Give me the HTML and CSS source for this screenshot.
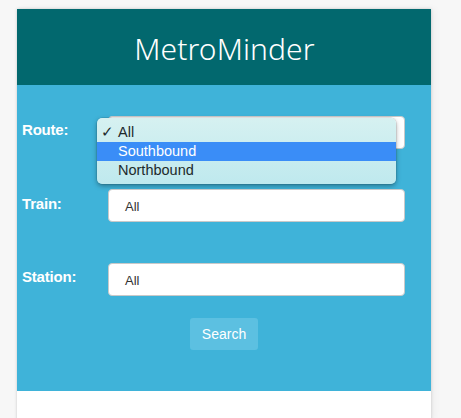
FILE: index.html
```html
<!DOCTYPE html>
<html>
<head>
<meta charset="utf-8">
<link rel="stylesheet" href="styles.css">
</head>
<body>
<div class="card">
  <header class="header"><h1 class="title">MetroMinder</h1></header>
  <main class="panel">
    <div class="row row-route">
      <label class="label">Route:</label>
      <div class="field"><span class="value"></span></div>
      <ul class="menu">
        <li class="opt"><span class="check">✓</span>All</li>
        <li class="opt opt-active">Southbound</li>
        <li class="opt">Northbound</li>
      </ul>
    </div>
    <div class="row row-train">
      <label class="label">Train:</label>
      <div class="field"><span class="value">All</span></div>
    </div>
    <div class="row row-station">
      <label class="label">Station:</label>
      <div class="field"><span class="value">All</span></div>
    </div>
    <div class="actions"><button class="btn">Search</button></div>
  </main>
  <footer class="foot"></footer>
</div>
</body>
</html>
```
FILE: styles.css
```css
html, body { margin: 0; padding: 0; }
body {
  background: #f7f7f7;
  width: 461px;
  height: 418px;
  overflow: hidden;
  font-family: "Liberation Sans", Arial, sans-serif;
}
.card {
  margin: 9px 0 0 17px;
  width: 414px;
  background: #fff;
  box-shadow: 0 0 3px rgba(0,0,0,0.18), 4px 0 8px rgba(0,0,0,0.04);
}
.header {
  background: #02686e;
  height: 76px;
  display: flex;
  align-items: center;
  justify-content: center;
}
.title {
  margin: 0;
  color: #fff;
  font-family: "Noto Sans", sans-serif;
  font-weight: 300;
  font-size: 30px;
  letter-spacing: 0.1px;
  padding-left: 1px;
  padding-top: 2px;
}
.panel {
  background: #3fb3d9;
  height: 306px;
  padding-top: 31px;
  box-sizing: border-box;
}
.row {
  position: relative;
  display: flex;
  align-items: flex-start;
  height: 33px;
  margin-left: 5px;
}
.row-train { margin-top: 40px; }
.row-station { margin-top: 41px; }
.label {
  width: 86px;
  color: #fff;
  font-weight: bold;
  font-size: 15px;
  letter-spacing: -0.2px;
  padding-top: 5px;
}
.row-train .label { padding-top: 6px; }
.row-station .label { padding-top: 5px; }
.field {
  width: 297px;
  height: 33px;
  box-sizing: border-box;
  background: #fff;
  border: 1px solid #c9c9c9;
  border-radius: 4px;
  display: flex;
  align-items: center;
  padding-left: 16px;
  padding-top: 1px;
  font-size: 13px;
  color: #333;
}
.menu {
  position: absolute;
  left: 75px;
  top: 2px;
  width: 299px;
  height: 66px;
  box-sizing: border-box;
  margin: 0;
  padding: 5px 0 0 0;
  list-style: none;
  border-radius: 5px;
  background: linear-gradient(#d6f1f1, #bfe9ee);
  box-shadow: 0 2px 5px rgba(0,0,0,0.35), 0 0 0 0.5px rgba(0,0,0,0.15);
  font-family: "Liberation Sans", Arial, sans-serif;
  font-size: 14.5px;
  color: #1d2a2c;
}
.opt {
  height: 19px;
  line-height: 19px;
  padding-left: 21px;
  position: relative;
}
.opt-active {
  background: #3a8df7;
  color: #fff;
}
.check {
  position: absolute;
  left: 4px;
  top: 0;
}
.actions {
  display: flex;
  justify-content: center;
  margin-top: 22px;
}
.btn {
  background: #5cc0e1;
  color: #fff;
  border: none;
  border-radius: 3px;
  width: 68px;
  height: 32px;
  font-family: "Liberation Sans", Arial, sans-serif;
  font-size: 14px;
  padding: 0;
}
.foot { height: 30px; background: #fff; }
```
